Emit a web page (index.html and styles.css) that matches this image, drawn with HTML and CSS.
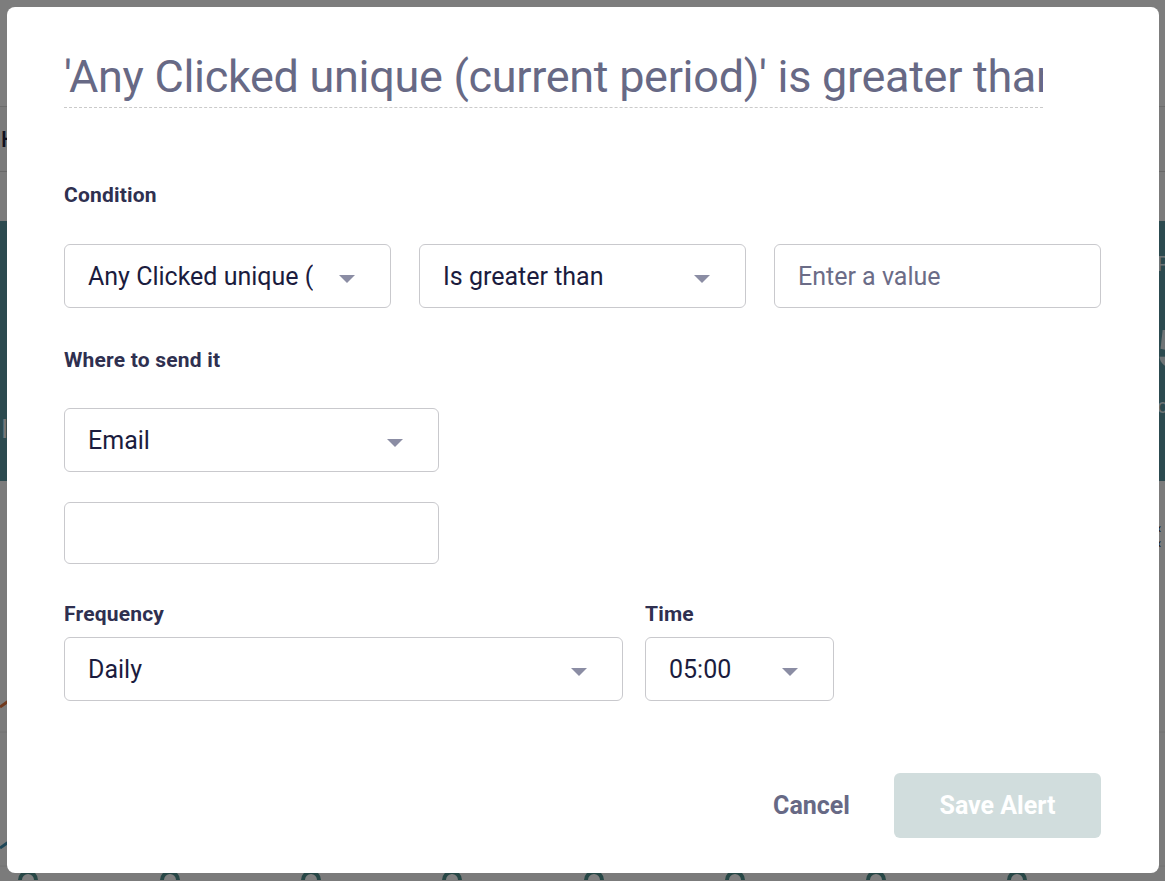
FILE: index.html
```html
<!DOCTYPE html>
<html lang="en">
<head>
<meta charset="utf-8">
<title>Create Alert</title>
<link rel="stylesheet" href="styles.css">
</head>
<body>
<div class="page">
  <header class="topbar"></header>
  <div class="toolbar"><span class="toolbar-text">Highlights</span></div>
  <div class="subbar"></div>
  <section class="hero">
    <div class="hero-left"><span class="hero-mark">I</span></div>
    <div class="hero-right">
      <span class="hero-small">Po</span>
      <span class="hero-big">5</span>
      <span class="hero-small">o</span>
    </div>
  </section>
  <section class="chart">
    <div class="chart-nav"><span>‹</span><span>‹</span></div>
    <svg class="chart-svg" width="1165" height="399" viewBox="0 0 1165 399">
      <path d="M0 226 L10 219" stroke="#e0733a" stroke-width="3" fill="none"/>
      <line x1="0" y1="251" x2="1165" y2="251" stroke="#e4e4e4" stroke-width="1"/>
      <path d="M0 367 L10 360" stroke="#3f8fb0" stroke-width="3" fill="none"/>
      <line x1="0" y1="385" x2="1165" y2="385" stroke="#e4e4e4" stroke-width="1"/>
      <g fill="#ffffff" stroke="#4f8f8c" stroke-width="4">
        <circle cx="28" cy="399" r="8"/>
        <circle cx="170" cy="399" r="8"/>
        <circle cx="311" cy="399" r="8"/>
        <circle cx="452" cy="399" r="8"/>
        <circle cx="594" cy="399" r="8"/>
        <circle cx="735" cy="399" r="8"/>
        <circle cx="876" cy="399" r="8"/>
        <circle cx="1017" cy="399" r="8"/>
      </g>
    </svg>
  </section>
</div>

<div class="overlay">
  <div class="modal" role="dialog" aria-label="Create alert">
    <div class="title-field">'Any Clicked unique (current period)' is greater than</div>

    <div class="label label-condition">Condition</div>
    <div class="row-three">
      <div class="select">
        <span class="select-text">Any Clicked unique (current period)</span>
        <span class="caret"></span>
      </div>
      <div class="select">
        <span class="select-text">Is greater than</span>
        <span class="caret"></span>
      </div>
      <div class="input">
        <span class="placeholder">Enter a value</span>
      </div>
    </div>

    <div class="label label-send">Where to send it</div>
    <div class="select select-email">
      <span class="select-text">Email</span>
      <span class="caret"></span>
    </div>
    <div class="input input-email"></div>

    <div class="row-schedule">
      <div class="col">
        <div class="label">Frequency</div>
        <div class="select">
          <span class="select-text">Daily</span>
          <span class="caret"></span>
        </div>
      </div>
      <div class="col">
        <div class="label">Time</div>
        <div class="select">
          <span class="select-text">05:00</span>
          <span class="caret"></span>
        </div>
      </div>
    </div>

    <div class="footer">
      <button class="btn-cancel" type="button">Cancel</button>
      <button class="btn-save" type="button">Save Alert</button>
    </div>
  </div>
</div>
</body>
</html>
```

FILE: styles.css
```css
* {
  box-sizing: border-box;
}

html, body {
  margin: 0;
  padding: 0;
  width: 1165px;
  height: 881px;
  overflow: hidden;
}

body {
  font-family: Roboto, "Liberation Sans", Arial, sans-serif;
  background: #ffffff;
}

/* ---------- background page ---------- */
.page {
  width: 1165px;
  height: 881px;
  background: #fbfbfb;
  display: flex;
  flex-direction: column;
}

.topbar {
  height: 107px;
  background: #fbfbfb;
  border-bottom: 1px solid #d8d8d8;
  flex-shrink: 0;
}

.toolbar {
  height: 65px;
  background: #f4f4f4;
  border-bottom: 1px solid #d0d0d0;
  display: flex;
  align-items: center;
  padding-left: 1px;
  flex-shrink: 0;
}

.toolbar-text {
  font-size: 22px;
  font-weight: 500;
  color: #1e2040;
}

.subbar {
  height: 49px;
  background: #f6f6f6;
  flex-shrink: 0;
}

.hero {
  height: 260px;
  background: #58949f;
  display: grid;
  grid-template-columns: 1157px 1fr;
  flex-shrink: 0;
}

.hero-left {
  padding-top: 193px;
  padding-left: 1px;
}

.hero-mark {
  color: #e8eef0;
  font-size: 26px;
}

.hero-right {
  display: flex;
  flex-direction: column;
  padding-top: 33px;
  color: #dfe9ec;
  line-height: 1;
}

.hero-small {
  font-size: 20px;
  margin-bottom: 50px;
}

.hero-big {
  font-size: 52px;
  font-weight: 700;
  margin-bottom: 20px;
}

.chart {
  flex: 1;
  background: #f7f7f7;
  display: flex;
  flex-direction: column;
  overflow: hidden;
}

.chart-nav {
  align-self: flex-end;
  width: 8px;
  font-size: 14px;
  line-height: 15px;
  color: #222;
  margin-top: 40px;
  margin-bottom: -70px;
  display: flex;
  flex-direction: column;
  overflow: hidden;
}

.chart-svg {
  display: block;
  flex-shrink: 0;
}

/* ---------- overlay + modal ---------- */
.overlay {
  position: fixed;
  inset: 0;
  background: rgba(0, 0, 0, 0.5);
  padding: 7px 6px 0 7px;
}

.modal {
  width: 1152px;
  background: #ffffff;
  border-radius: 8px;
  padding: 43px 58px 35px 57px;
  display: flex;
  flex-direction: column;
}

.title-field {
  width: 979px;
  height: 58px;
  font-size: 45px;
  line-height: 54px;
  letter-spacing: -0.3px;
  color: #676985;
  white-space: nowrap;
  overflow: hidden;
  padding-bottom: 3px;
  border-bottom: 1px dashed #cacaca;
}

.label {
  font-size: 21px;
  line-height: 24px;
  font-weight: 700;
  color: #2f3050;
  letter-spacing: 0.2px;
}

.label-condition {
  margin-top: 75px;
}

.label-send {
  margin-top: 40px;
}

.row-three {
  margin-top: 37px;
  display: grid;
  grid-template-columns: repeat(3, minmax(0, 1fr));
  column-gap: 28px;
}

.select,
.input {
  min-width: 0;
  height: 64px;
  border: 1px solid #c9c9cd;
  border-radius: 6px;
  background: #ffffff;
  display: flex;
  align-items: center;
  padding: 0 35px 0 23px;
  font-size: 25px;
  color: #1b1c3e;
  overflow: hidden;
}

.select-text {
  flex: 1 1 auto;
  min-width: 0;
  overflow: hidden;
  white-space: nowrap;
  margin-right: 26px;
}

.caret {
  flex-shrink: 0;
  width: 0;
  height: 0;
  border-left: 8.5px solid transparent;
  border-right: 8.5px solid transparent;
  border-top: 8px solid #8b8da4;
  margin-top: 6px;
}

.placeholder {
  color: #6b6c87;
}

.select-email {
  margin-top: 36px;
  width: 375px;
}

.input-email {
  margin-top: 30px;
  width: 375px;
  height: 62px;
}

.row-schedule {
  margin-top: 38px;
  display: grid;
  grid-template-columns: 559px 189px;
  column-gap: 22px;
}

.col {
  display: flex;
  flex-direction: column;
  gap: 11px;
}

.footer {
  margin-top: 72px;
  display: flex;
  justify-content: flex-end;
  align-items: center;
  gap: 22px;
}

.btn-cancel {
  font-family: inherit;
  font-size: 25px;
  font-weight: 700;
  color: #676985;
  background: none;
  border: none;
  padding: 0 22px;
  height: 65px;
  cursor: pointer;
}

.btn-save {
  font-family: inherit;
  font-size: 25px;
  font-weight: 700;
  color: #ffffff;
  background: #d1dddd;
  border: none;
  border-radius: 6px;
  width: 207px;
  height: 65px;
  padding: 0;
  cursor: default;
}
```
